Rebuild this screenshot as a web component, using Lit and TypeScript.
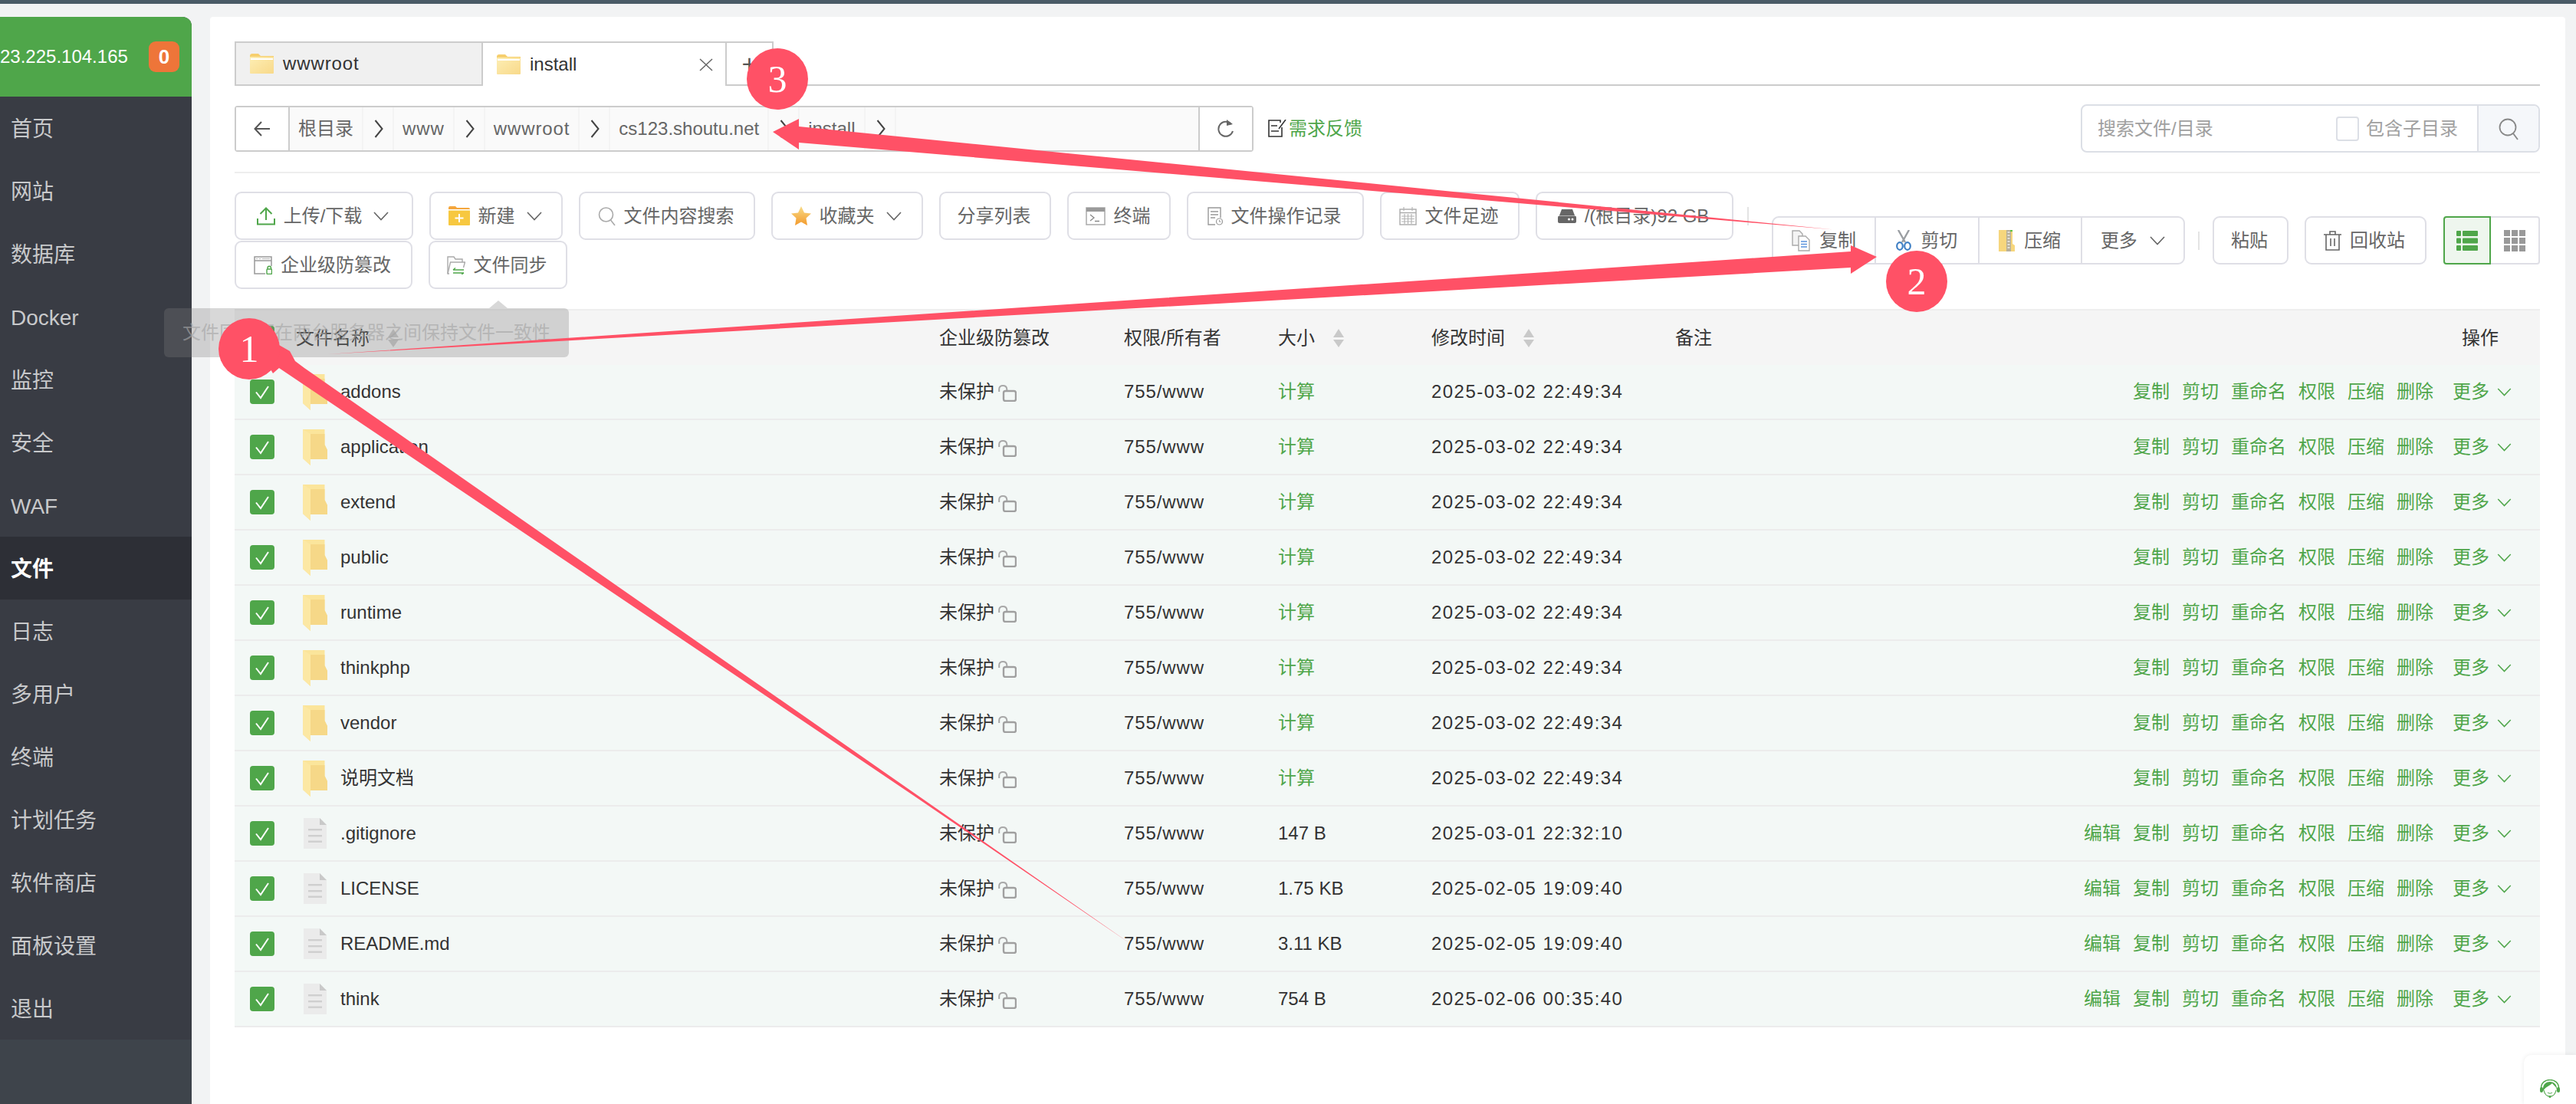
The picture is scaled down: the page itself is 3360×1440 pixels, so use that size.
import { LitElement, html, css, svg } from "lit";
import { customElement } from "lit/decorators.js";

const GREEN = "#4fa64a";
const chev = (c = "#666") => html`<svg class="chev" viewBox="0 0 20 12"><path d="M1 1 L10 10.5 L19 1" fill="none" stroke="${c}" stroke-width="1.6"/></svg>`;
const crumbSep = html`<svg class="csep" viewBox="0 0 12 24"><path d="M1.5 1 L10.5 12 L1.5 23" fill="none" stroke="#444" stroke-width="2"/></svg>`;

const folderTab = html`<svg class="ftab" viewBox="0 0 31 26">
  <defs><linearGradient id="ft" x1="0" y1="0" x2="1" y2="1"><stop offset="0" stop-color="#fdeeb4"/><stop offset="1" stop-color="#f8d98a"/></linearGradient></defs>
  <path d="M0 3 Q0 0 3 0 H11 L14 3 H31 V7 H0Z" fill="#f6cf6e"/><rect y="4" width="31" height="22" rx="1" fill="url(#ft)"/><rect x="1" y="6" width="29" height="2" fill="#fff"/></svg>`;

const folderRow = html`<svg class="ficon" viewBox="0 0 32 47">
  <path d="M0 0 H28.5 V20 L32 27 V39 H10 V47 L0 38Z" fill="#fbe59b"/>
  <path d="M0 0 L10 6 H28.5 V20 L32 27 V39 H10 V6Z" fill="#f6d888"/>
  <path d="M0 0 L10 6 V47 L0 38Z" fill="#fce8a4"/></svg>`;

const fileRow = html`<svg class="fileicon" viewBox="0 0 30 40">
  <path d="M0 0 H21 L30 9 V40 H0Z" fill="#ebebeb"/><path d="M21 0 L30 9 H21Z" fill="#c9c9c9"/>
  <rect x="6" y="14" width="18" height="2.4" fill="#cfcfcf"/><rect x="6" y="22" width="18" height="2.4" fill="#cfcfcf"/><rect x="6" y="29.5" width="18" height="2.4" fill="#cfcfcf"/></svg>`;

const check = html`<span class="cb"><svg viewBox="0 0 32 32"><path d="M8 16.5 L14 24 L24 9" fill="none" stroke="#fff" stroke-width="2"/></svg></span>`;

const lock = html`<svg class="lock" viewBox="0 0 24 22"><path d="M1.2 9 V5.500 C1.200 -0.500 10.800 -0.500 11.300 5.500 V8" fill="none" stroke="#a8a8a8" stroke-width="2"/><rect x="7" y="8" width="16" height="13" rx="2.5" fill="none" stroke="#a0a0a0" stroke-width="2.4"/></svg>`;

const sort = html`<svg class="sort" viewBox="0 0 16 24"><path d="M8 0 L15 11 H1Z" fill="#c9c9c9"/><path d="M8 24 L15 14 H1Z" fill="#c9c9c9"/></svg>`;

const icons: Record<string, any> = {
  upload: html`<svg class="i" style="width:24px;height:24px" viewBox="0 0 24 24"><path d="M12 17 V2 M4.500 9 L12 1.500 L19.500 9 M1 15 V22.500 H23 V15" fill="none" stroke="${GREEN}" stroke-width="2"/></svg>`,
  newf: html`<svg class="i" style="width:28px;height:25px" viewBox="0 0 28 25"><path d="M0 2 Q0 0 2 0 H9 L11 2 H26 Q28 2 28 4 V8 H0Z" fill="#f4a63c"/><rect y="4" width="28" height="21" rx="1" fill="#f7c840"/><rect y="4" width="28" height="1.500" fill="#fff"/><path d="M14 10 V21 M8.500 15.500 H19.500" stroke="#fff" stroke-width="2"/></svg>`,
  search: html`<svg class="i" style="width:23px;height:26px" viewBox="0 0 23 26"><circle cx="10.500" cy="11" r="9" fill="none" stroke="#aaa" stroke-width="1.600"/><path d="M16.500 18 L22 25" stroke="#aaa" stroke-width="1.600"/></svg>`,
  tamper: html`<svg class="i" style="width:24px;height:24px" viewBox="0 0 24 24"><path d="M15 23 H1 V1 H23 V13" fill="none" stroke="#999" stroke-width="1.500"/><path d="M1 6 H23" stroke="#999" stroke-width="1.500"/><path d="M3 3.500 H5 M7 3.500 H9 M11 3.500 H21" stroke="#bbb" stroke-width="1"/><rect x="17" y="17" width="6.500" height="6.500" rx="1" fill="none" stroke="${GREEN}" stroke-width="1.400"/><path d="M18 17 V15.500 A2.200 2.200 0 0 1 22.500 15.500 V17" fill="none" stroke="${GREEN}" stroke-width="1.400"/></svg>`,
  sync: html`<svg class="i" style="width:24px;height:24px" viewBox="0 0 24 24"><path d="M3 23 H1 V1 H9 L11 4 H20 V8" fill="none" stroke="#aaa" stroke-width="1.400"/><path d="M1 23 L4.500 8 H23.500 L21.500 15" fill="none" stroke="#aaa" stroke-width="1.400"/><path d="M8 18 H22 M8 18 L11 15.500 M22 22 H8 M22 22 L19 24" fill="none" stroke="${GREEN}" stroke-width="1.400"/></svg>`,
  star: html`<svg class="i" style="width:26px;height:25px" viewBox="0 0 26 25"><defs><linearGradient id="st" x1="0" y1="0" x2="0" y2="1"><stop offset="0" stop-color="#f8dc88"/><stop offset="1" stop-color="#f39a2c"/></linearGradient></defs><path d="M13 0 L17 8.500 L26 9.500 L19.500 15.500 L21 25 L13 20.500 L5 25 L6.500 15.500 L0 9.500 L9 8.500Z" fill="url(#st)"/></svg>`,
  term: html`<svg class="i" style="width:26px;height:24px" viewBox="0 0 26 24"><rect x="1" y="1" width="24" height="22" fill="none" stroke="#aaa" stroke-width="1.500"/><rect x="1" y="1" width="24" height="5" fill="#999"/><path d="M6 10 L11 14 L6 18 M12 18.500 H18" fill="none" stroke="#888" stroke-width="1.300"/></svg>`,
  log: html`<svg class="i" style="width:20px;height:24px" viewBox="0 0 20 24"><path d="M10 23 H1 V1 H17 V14" fill="none" stroke="#999" stroke-width="1.400"/><path d="M4 6 H14 M4 10 H14 M4 14 H10" stroke="#999" stroke-width="1.300"/><circle cx="15.500" cy="19" r="4" fill="none" stroke="#999" stroke-width="1.200"/><path d="M15.500 17 V19.200 H17.500" fill="none" stroke="#999"/></svg>`,
  cal: html`<svg class="i" style="width:23px;height:24px" viewBox="0 0 23 24"><rect x="1" y="3" width="21" height="20" fill="none" stroke="#aaa" stroke-width="1.400"/><path d="M1 7.500 H22" stroke="#aaa" stroke-width="1.400"/><path d="M6 0 V5 M17 0 V5 M3 12 H20 M3 15.500 H20 M3 19 H20 M7 9 V22 M11.500 9 V22 M16 9 V22" stroke="#b5b5b5" stroke-width="1.200"/></svg>`,
  disk: html`<svg class="i" style="width:24px;height:18px" viewBox="0 0 24 18"><path d="M5 0 H19 L22 8 H2Z" fill="#666"/><rect y="8.500" width="24" height="9.500" rx="2" fill="#666"/><circle cx="14.500" cy="13" r="1.500" fill="#fff"/><circle cx="19" cy="13" r="1.500" fill="#fff"/></svg>`,
  copy: html`<svg class="i" style="width:24px;height:28px" viewBox="0 0 24 28"><path d="M1 1 H10 L14 5 V20 H1Z" fill="#f4f4f4" stroke="#aaa" stroke-width="1.400"/><path d="M9 8 H18 L23 13 V27 H9Z" fill="#fff" stroke="#aaa" stroke-width="1.400"/><path d="M12 15 H20 M12 18.500 H20 M12 22 H20" stroke="#5a93dd" stroke-width="1.600"/></svg>`,
  scissors: html`<svg class="i" style="width:20px;height:27px" viewBox="0 0 20 27"><path d="M3 0 L12 16 M17 0 L8 16" stroke="#9a9ea2" stroke-width="2.400" fill="none"/><ellipse cx="5" cy="21" rx="3.800" ry="4.800" fill="none" stroke="#3f7fc4" stroke-width="2.200"/><ellipse cx="15" cy="21" rx="3.800" ry="4.800" fill="none" stroke="#3f7fc4" stroke-width="2.200"/></svg>`,
  zip: html`<svg class="i" style="width:21px;height:28px" viewBox="0 0 21 28"><path d="M0 0 H18 V18 L21 20 V28 H0Z" fill="#f6d67d"/><rect x="10" y="0" width="6" height="28" fill="#b8b09a"/><rect x="15" y="0" width="3" height="2" fill="#5fc246"/><path d="M11.500 3 H14.500 M11.500 7 H14.500 M11.500 11 H14.500 M11.500 15 H14.500 M11.500 19 H14.500 M11.500 23 H14.500" stroke="#eee" stroke-width="1.500"/></svg>`,
  trash: html`<svg class="i" style="width:23px;height:26px" viewBox="0 0 23 26"><path d="M0 5 H23 M8 5 V1 H15 V5 M3 5 V25 H20 V5 M9 10 V20 M14 10 V20" fill="none" stroke="#666" stroke-width="1.600"/></svg>`,
};

interface Btn { w: number; t: string; i?: string; c?: boolean }
const row: Btn[] = [
  { w: 233, t: "上传/下载", i: "upload", c: true },
  { w: 174, t: "新建", i: "newf", c: true },
  { w: 230, t: "文件内容搜索", i: "search" },
  { w: 198, t: "收藏夹", i: "star", c: true },
  { w: 146, t: "分享列表" },
  { w: 135, t: "终端", i: "term" },
  { w: 231, t: "文件操作记录", i: "log" },
  { w: 182, t: "文件足迹", i: "cal" },
  { w: 258, t: "/(根目录)92 GB", i: "disk" },
];
const row2: Btn[] = [
  { w: 232, t: "企业级防篡改", i: "tamper" },
  { w: 181, t: "文件同步", i: "sync" },
];

const menu = ["首页","网站","数据库","Docker","监控","安全","WAF","文件","日志","多用户","终端","计划任务","软件商店","面板设置","退出"];
const crumbs = ["根目录","www","wwwroot","cs123.shoutu.net","install"];
const rows = [
  ["addons",1,"计算","2025-03-02 22:49:34"],["application",1,"计算","2025-03-02 22:49:34"],["extend",1,"计算","2025-03-02 22:49:34"],
  ["public",1,"计算","2025-03-02 22:49:34"],["runtime",1,"计算","2025-03-02 22:49:34"],["thinkphp",1,"计算","2025-03-02 22:49:34"],
  ["vendor",1,"计算","2025-03-02 22:49:34"],["说明文档",1,"计算","2025-03-02 22:49:34"],
  [".gitignore",0,"147 B","2025-03-01 22:32:10"],["LICENSE",0,"1.75 KB","2025-02-05 19:09:40"],["README.md",0,"3.11 KB","2025-02-05 19:09:40"],["think",0,"754 B","2025-02-06 00:35:40"],
] as [string, number, string, string][];

@customElement("app-root")
export class AppRoot extends LitElement {
  static styles = css`
    :host { --g:#4fa64a; display:block; width:3360px; height:1440px; position:relative; overflow:hidden; background:#f2f3f4; font-family:"Liberation Sans","Noto Sans CJK SC",sans-serif; font-size:24px; color:#333; }
    * { box-sizing:border-box; }
    .top { height:5px; background:#4a5b67; }
    .body { display:flex; height:1435px; padding:17px 14px 0 0; gap:24px; }
    .side { width:250px; flex:none; background:#3e444b; border-radius:0 12px 0 0; overflow:hidden; display:flex; flex-direction:column; }
    .head { height:104px; background:var(--g); display:flex; align-items:center; color:#fff; flex:none; }
    .ip { width:194px; white-space:nowrap; line-height:1; }
    .badge { width:40px; height:40px; border-radius:9px; background:#ee7539; display:flex; align-items:center; justify-content:center; font-size:26px; font-weight:700; }
    .menu { background:#393c44; }
    .mi { height:82px; padding:3px 0 0 14px; display:flex; align-items:center; font-size:28px; color:#c8c9cb; line-height:1; }
    .mi.on { background:#2d2f36; color:#fff; font-weight:700; }
    .main { flex:1; background:#fff; border-radius:4px 4px 0 0; padding:32px 33px 0 32px; min-width:0; }
    .tabs { height:58px; display:flex; border-bottom:2px solid #ccc; }
    .tab { display:flex; align-items:center; border:2px solid #ccc; border-width:2px 0 0 2px; height:56px; padding-left:18px; gap:12px; color:#333; line-height:1; position:relative; }
    .tab.a { width:322px; background:#f0f0f0; }
    .tab.b { width:318px; background:#fff; margin-bottom:-2px; height:58px; }
    .tab.p { width:63px; padding:0; justify-content:center; border-right:2px solid #ccc; font-size:34px; color:#555; }
    .ftab { width:31px; height:26px; flex:none; }
    .close { position:absolute; right:16px; top:20px; width:18px; height:17px; }
    .wd { letter-spacing:.9px; }
    .bar { display:flex; align-items:center; height:63px; margin-top:24px; }
    .bc { width:1329px; height:60px; display:flex; border:2px solid #ccc; border-radius:4px; background:#fafafa; color:#666; flex:none; }
    .back { width:70px; flex:none; background:#fff; border-right:2px solid #ccc; display:flex; align-items:center; justify-content:center; }
    .back svg { width:22px; height:22px; }
    .crumbs { flex:1; display:flex; line-height:1; }
    .crumb { padding:0 11px; display:flex; align-items:center; border-right:2px solid #f4f4f4; white-space:nowrap; }
    .crumb.n { padding:0 12px 0 14px; }
    .csep { width:12px; height:24px; }
    .ref { width:70px; flex:none; background:#fff; border-left:2px solid #ccc; display:flex; align-items:center; justify-content:center; }
    .ref svg { width:22px; height:26px; }
    .fb { display:flex; align-items:center; margin-left:19px; color:var(--g); line-height:1; gap:3px; }
    .fb svg { width:24px; height:23px; }
    .sbox { margin-left:auto; width:599px; height:63px; display:flex; border:2px solid #dcdfe6; border-radius:8px; overflow:hidden; align-items:center; color:#a0a0a0; line-height:1; }
    .ph { padding-left:20px; width:331px; }
    .sc { width:30px; height:32px; border:2px solid #dcdfe6; border-radius:4px; margin-right:9px; }
    .sl { flex:1; }
    .sb { width:80px; height:100%; background:#f5f7fa; border-left:2px solid #dcdfe6; display:flex; align-items:center; justify-content:center; }
    .sb svg { width:26px; height:30px; }
    .hr { height:2px; background:#eee; margin-top:25px; }
    .tool { display:flex; justify-content:space-between; align-items:center; margin-top:24px; height:127px; }
    .left { width:1998px; flex:none; display:flex; flex-wrap:wrap; gap:1px 21px; align-items:center; }
    .btn { height:63px; border:2px solid #dfdfe6; border-radius:9px; display:flex; align-items:center; justify-content:center; color:#666; white-space:nowrap; line-height:1; background:#fff; gap:11px; flex:none; padding-right:3px; }
    .i { flex:none; }
    .chev { width:20px; height:12px; flex:none; margin-left:4px; }
    .vsep { width:2px; height:24px; background:#e4e4e4; margin-left:-3px; }
    .right { display:flex; align-items:center; }
    .grp { display:flex; height:63px; border:2px solid #dfdfe6; border-radius:9px; width:539px; }
    .cell { flex:1; display:flex; align-items:center; justify-content:center; gap:12px; color:#666; line-height:1; border-right:2px solid #dfdfe6; }
    .cell:last-child { border-right:0; }
    .rv { width:2px; height:24px; background:#e4e4e4; margin:0 17px; }
    .gap { margin-left:21px; }
    .view { display:flex; height:63px; width:126px; margin-left:22px; }
    .v1 { width:62px; border:2px solid var(--g); background:#eef6ee; border-radius:4px 0 0 4px; display:flex; align-items:center; justify-content:center; }
    .v2 { flex:1; border:2px solid #dfdfe6; border-left:0; border-radius:0 4px 4px 0; display:flex; align-items:center; justify-content:center; }
    .v1 svg, .v2 svg { width:28px; height:28px; }
    .table { margin-top:26px; }
    .thead { height:73px; background:#f5f5f5; border-top:2px solid #eee; display:grid; grid-template-columns:80px 839px 241px 201px 200px 318px 1fr 102px; align-items:center; line-height:1; color:#333; }
    .tc { display:flex; align-items:center; }
    .cbw { padding-left:20px; display:flex; align-items:center; }
    .cb { width:32px; height:32px; background:var(--g); border-radius:4px; display:block; flex:none; }
    .cb svg { width:32px; height:32px; display:block; }
    .sort { width:16px; height:24px; margin-left:23px; flex:none; }
    .tr { height:72px; background:#f3f8f6; border-bottom:2px solid #ececec; display:grid; grid-template-columns:88px 50px 781px 241px 201px 200px 1fr auto; align-items:center; line-height:1; color:#333; }
    .ficon { width:32px; height:47px; margin-left:1px; display:block; }
    .fileicon { width:30px; height:40px; margin-left:2px; display:block; }
    .prot { gap:5px; }
    .lock { width:24px; height:22px; margin-top:4px; flex:none; }
    .g { color:var(--g); }
    .date { letter-spacing:1.45px; white-space:nowrap; }
    .ops { display:flex; align-items:center; gap:16px; padding-right:37px; color:var(--g); }
    .more { margin-left:9px; display:flex; align-items:center; gap:6px; }
    .more .chev { width:19px; height:11px; }
    .tip { position:absolute; left:214px; top:402px; width:528px; height:64px; border-radius:6px; background:rgba(125,125,125,.3); color:rgba(165,165,165,.65); display:flex; align-items:center; justify-content:center; line-height:1; white-space:nowrap; }
    .tip::before { content:""; position:absolute; left:424px; top:-10px; border:12px solid transparent; border-top:0; border-bottom:10px solid rgba(125,125,125,.3); }
    .over { position:absolute; left:0; top:0; width:3360px; height:1440px; pointer-events:none; }
    .over text { font-family:"Liberation Serif",serif; font-size:50px; fill:#fff; text-anchor:middle; }
    .cs { position:absolute; right:0; bottom:0; width:68px; height:64px; background:#fff; border-radius:10px 0 0 0; box-shadow:0 0 6px rgba(0,0,0,.08); display:flex; align-items:flex-start; justify-content:center; padding-top:32px; }
    .cs svg { width:26px; height:24px; }
  `;

  private renderBtn(b: Btn) {
    return html`<div class="btn" style="width:${b.w}px">${b.i ? icons[b.i] : ""}<span>${b.t}</span>${b.c ? chev() : ""}</div>`;
  }

  render() {
    return html`
      <div class="top"></div>
      <div class="body">
        <aside class="side">
          <div class="head"><div class="ip">23.225.104.165</div><div class="badge">0</div></div>
          <nav class="menu">${menu.map((m) => html`<div class="mi ${m === "文件" ? "on" : ""}">${m}</div>`)}</nav>
        </aside>
        <main class="main">
          <div class="tabs">
            <div class="tab a">${folderTab}<span class="wd">wwwroot</span></div>
            <div class="tab b">${folderTab}<span>install</span><svg class="close" viewBox="0 0 18 17"><path d="M1 1 L17 16 M17 1 L1 16" stroke="#666" stroke-width="1.500"/></svg></div>
            <div class="tab p">+</div>
          </div>
          <div class="bar">
            <div class="bc">
              <div class="back"><svg viewBox="0 0 22 22"><path d="M21 11 H2 M10 2 L1.500 11 L10 20" fill="none" stroke="#555" stroke-width="2"/></svg></div>
              <div class="crumbs">${crumbs.map((c) => html`<div class="crumb ${/^w+/.test(c) ? "wd" : ""}">${c}</div><div class="crumb n">${crumbSep}</div>`)}</div>
              <div class="ref"><svg viewBox="0 0 22 26"><path d="M18 7 A9.500 9.500 0 1 0 20 16" fill="none" stroke="#666" stroke-width="2"/><path d="M12 1 L20 7 L12 9Z" fill="#666"/></svg></div>
            </div>
            <div class="fb"><svg viewBox="0 0 24 23"><path d="M16 4 V1 H1 V22 H18 V10" fill="none" stroke="#333" stroke-width="1.600"/><path d="M4 8 H12 M4 15 H14" stroke="#333" stroke-width="1.600"/><path d="M14 12 L23 0" stroke="#333" stroke-width="1.600"/></svg><span>需求反馈</span></div>
            <div class="sbox"><div class="ph">搜索文件/目录</div><div class="sc"></div><div class="sl">包含子目录</div>
              <div class="sb"><svg viewBox="0 0 26 30"><circle cx="12" cy="13" r="10.500" fill="none" stroke="#888" stroke-width="1.800"/><path d="M19 21 L25 29" stroke="#888" stroke-width="1.800"/></svg></div></div>
          </div>
          <div class="hr"></div>
          <div class="tool">
            <div class="left">${row.map((b) => this.renderBtn(b))}<div class="vsep"></div>${row2.map((b) => this.renderBtn(b))}</div>
            <div class="right">
              <div class="grp">
                <div class="cell">${icons.copy}<span>复制</span></div>
                <div class="cell">${icons.scissors}<span>剪切</span></div>
                <div class="cell">${icons.zip}<span>压缩</span></div>
                <div class="cell"><span>更多</span>${chev()}</div>
              </div>
              <div class="rv"></div>
              <div class="btn" style="width:99px">粘贴</div>
              <div class="btn gap" style="width:159px">${icons.trash}<span>回收站</span></div>
              <div class="view">
                <div class="v1"><svg viewBox="0 0 28 28"><g fill="${GREEN}"><rect y="1" width="6" height="7" rx="1"/><rect x="8" y="1" width="20" height="7" rx="1"/><rect y="10.500" width="6" height="7" rx="1"/><rect x="8" y="10.500" width="20" height="7" rx="1"/><rect y="20" width="6" height="7" rx="1"/><rect x="8" y="20" width="20" height="7" rx="1"/></g></svg></div>
                <div class="v2"><svg viewBox="0 0 28 28"><g fill="#999">${[0, 10, 20].map((y) => [0, 10, 20].map((x) => svg`<rect x="${x}" y="${y}" width="8" height="8"/>`))}</g></svg></div>
              </div>
            </div>
          </div>
          <div class="table">
            <div class="thead">
              <div class="cbw">${check}</div>
              <div class="tc"><span>文件名称</span>${sort}</div>
              <div>企业级防篡改</div>
              <div>权限/所有者</div>
              <div class="tc"><span>大小</span>${sort}</div>
              <div class="tc"><span>修改时间</span>${sort}</div>
              <div>备注</div>
              <div>操作</div>
            </div>
            ${rows.map(([n, d, s, t]) => html`<div class="tr">
              <div class="cbw">${check}</div>
              <div>${d ? folderRow : fileRow}</div>
              <div>${n}</div>
              <div class="tc prot"><span>未保护</span>${lock}</div>
              <div class="wd">755/www</div>
              <div class="${d ? "g" : ""}">${s}</div>
              <div class="date">${t}</div>
              <div class="ops">${d ? "" : html`<span>编辑</span>`}<span>复制</span><span>剪切</span><span>重命名</span><span>权限</span><span>压缩</span><span>删除</span><span class="more">更多${chev(GREEN)}</span></div>
            </div>`)}
          </div>
        </main>
      </div>
      <div class="tip">文件同步可在两台服务器之间保持文件一致性</div>
      <svg class="over" viewBox="0 0 3360 1440">
        <g fill="#ff5166">
          <polygon points="1476,1232 971,880 397,480 385,471 378,458 320,425 356,487 364,480 958,880 1195,1040"/>
          <polygon points="428,462 2414,328 2414,320 2448,335 2414,357 2414,349"/>
          <polygon points="2392,299.500 1042,165 1042,155 1008,172 1042,195 1042,186"/>
          <circle cx="325" cy="455" r="40"/><circle cx="2500" cy="367" r="40"/><circle cx="1014" cy="103" r="40"/>
        </g>
        <text x="325" y="472">1</text><text x="2500" y="384">2</text><text x="1014" y="120">3</text>
      </svg>
      <div class="cs"><svg viewBox="0 0 26 24"><path d="M4 12 C4 0 22 0 22 12 V15 C22 9 18 8 16 5 C13 8 8 9 4 15Z" fill="${GREEN}"/><path d="M1.500 11 C1.500 -3 24.500 -3 24.500 11" fill="none" stroke="${GREEN}" stroke-width="1.400"/><rect x="0" y="10" width="4" height="7" rx="2" fill="${GREEN}"/><rect x="22" y="10" width="4" height="7" rx="2" fill="${GREEN}"/><path d="M5 14 C6 20 10 22 13 22 C16 22 20 20 21 14" fill="none" stroke="${GREEN}" stroke-width="1.200"/><path d="M10 17 C11.500 18.500 14.500 18.500 16 17" fill="none" stroke="${GREEN}" stroke-width="1"/><circle cx="13" cy="22.500" r="1.500" fill="${GREEN}"/></svg></div>
    `;
  }
}
